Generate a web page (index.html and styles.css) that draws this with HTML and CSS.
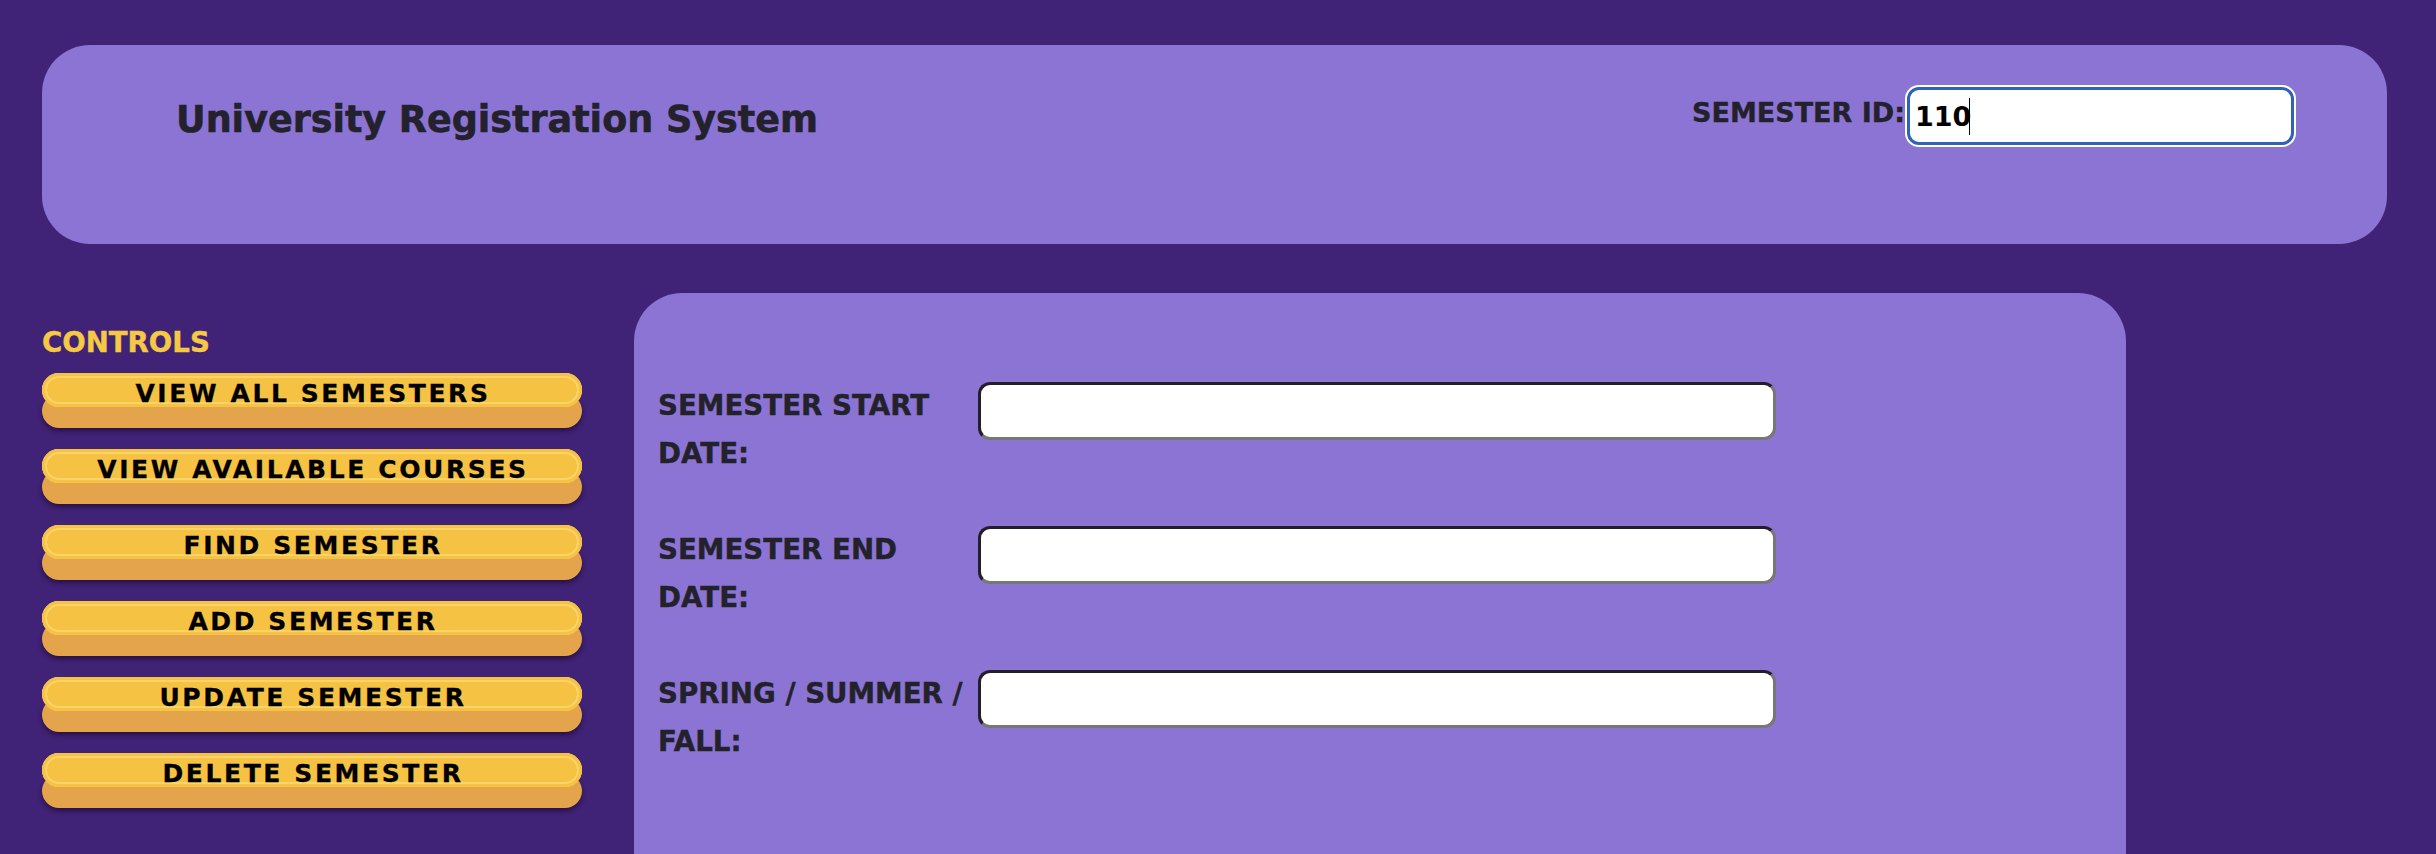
FILE: index.html
```html
<!DOCTYPE html>
<html lang="en">
<head>
<meta charset="utf-8">
<title>University Registration System</title>
<link rel="stylesheet" href="styles.css">
</head>
<body>
<header class="topbar">
  <h1 class="title">University Registration System</h1>
  <div class="id-group">
    <label class="id-label" for="semId">SEMESTER ID:</label>
    <span class="id-field">
      <input id="semId" class="field field-id" type="text" value="110">
      <span class="caret"></span>
    </span>
  </div>
</header>
<div class="content">
  <aside class="controls">
    <h2 class="controls-title">CONTROLS</h2>
    <button class="btn" type="button">VIEW ALL SEMESTERS</button>
    <button class="btn" type="button">VIEW AVAILABLE COURSES</button>
    <button class="btn" type="button">FIND SEMESTER</button>
    <button class="btn" type="button">ADD SEMESTER</button>
    <button class="btn" type="button">UPDATE SEMESTER</button>
    <button class="btn" type="button">DELETE SEMESTER</button>
  </aside>
  <main class="form-panel">
    <div class="row">
      <label class="row-label" for="startDate">SEMESTER START DATE:</label>
      <input id="startDate" class="field field-wide" type="text">
    </div>
    <div class="row">
      <label class="row-label" for="endDate">SEMESTER END DATE:</label>
      <input id="endDate" class="field field-wide" type="text">
    </div>
    <div class="row">
      <label class="row-label" for="term">SPRING / SUMMER / FALL:</label>
      <input id="term" class="field field-wide" type="text">
    </div>
  </main>
</div>
</body>
</html>
```
FILE: styles.css
```css
html, body {
  height: 100%;
}

body {
  margin: 0;
  padding: 45px 49px 0 42px;
  box-sizing: border-box;
  background: #402276;
  font-family: "DejaVu Sans", "Liberation Sans", sans-serif;
  font-weight: 700;
  overflow: hidden;
}

.topbar {
  display: flex;
  justify-content: space-between;
  align-items: flex-start;
  height: 199px;
  box-sizing: border-box;
  padding: 42px 93px 0 134px;
  background: #8b74d3;
  border-radius: 48px;
}

.title {
  margin: 10px 0 0;
  font-size: 36.5px;
  line-height: 46px;
  font-weight: 700;
  color: #23212b;
  -webkit-text-stroke: 0.6px #23212b;
}

.id-group {
  display: flex;
  align-items: flex-start;
}

.id-label {
  margin-top: 9px;
  font-size: 27px;
  line-height: 33px;
  color: #23212b;
  -webkit-text-stroke: 0.4px #23212b;
}

.id-field {
  position: relative;
  display: block;
  margin-left: 2px;
}

.field {
  display: block;
  box-sizing: border-box;
  height: 58px;
  padding: 0 5px;
  border: 3px solid;
  border-color: #221f29 #777777 #777777 #221f29;
  border-radius: 12px;
  background: #ffffff;
  font-family: "DejaVu Sans", sans-serif;
  font-weight: 700;
  font-size: 27px;
  color: #000000;
  outline: none;
}

.field-id {
  width: 387px;
  border-color: #2f63b6;
  box-shadow: 0 0 0 2px #ffffff;
}

.caret {
  position: absolute;
  left: 62px;
  top: 11px;
  width: 1px;
  height: 37px;
  background: #000000;
}

.content {
  display: flex;
  align-items: flex-start;
  gap: 52px;
  margin-top: 49px;
}

.controls {
  width: 540px;
  flex: none;
}

.controls-title {
  margin: 33px 0 14px;
  font-size: 27.6px;
  line-height: 33px;
  font-weight: 700;
  color: #f6c945;
  -webkit-text-stroke: 0.4px #f6c945;
}

.btn {
  display: block;
  width: 540px;
  height: 34px;
  box-sizing: border-box;
  margin: 0 0 42px;
  padding: 9px 0 1px 2px;
  border: none;
  border-radius: 17px;
  background: #f6c244;
  box-shadow:
    inset 0 0 0 3px #f6c244,
    inset 0 0 0 5px #fad467,
    0 21px 0 #e3a44b,
    0 24px 4px rgba(25, 8, 35, 0.6);
  font-family: "DejaVu Sans", sans-serif;
  font-weight: 700;
  font-size: 25px;
  line-height: 24px;
  letter-spacing: 2.6px;
  color: #000000;
  text-align: center;
  -webkit-text-stroke: 0.3px #000000;
}

.form-panel {
  width: 1492px;
  min-height: 620px;
  box-sizing: border-box;
  padding: 89px 0 0 24px;
  background: #8b74d3;
  border-radius: 48px;
}

.row {
  display: flex;
  align-items: flex-start;
  margin-bottom: 48px;
}

.row-label {
  width: 312px;
  flex: none;
  font-size: 27.7px;
  line-height: 48px;
  color: #23222b;
  -webkit-text-stroke: 0.4px #23222b;
}

.field-wide {
  width: 798px;
  margin-left: 8px;
}
```
